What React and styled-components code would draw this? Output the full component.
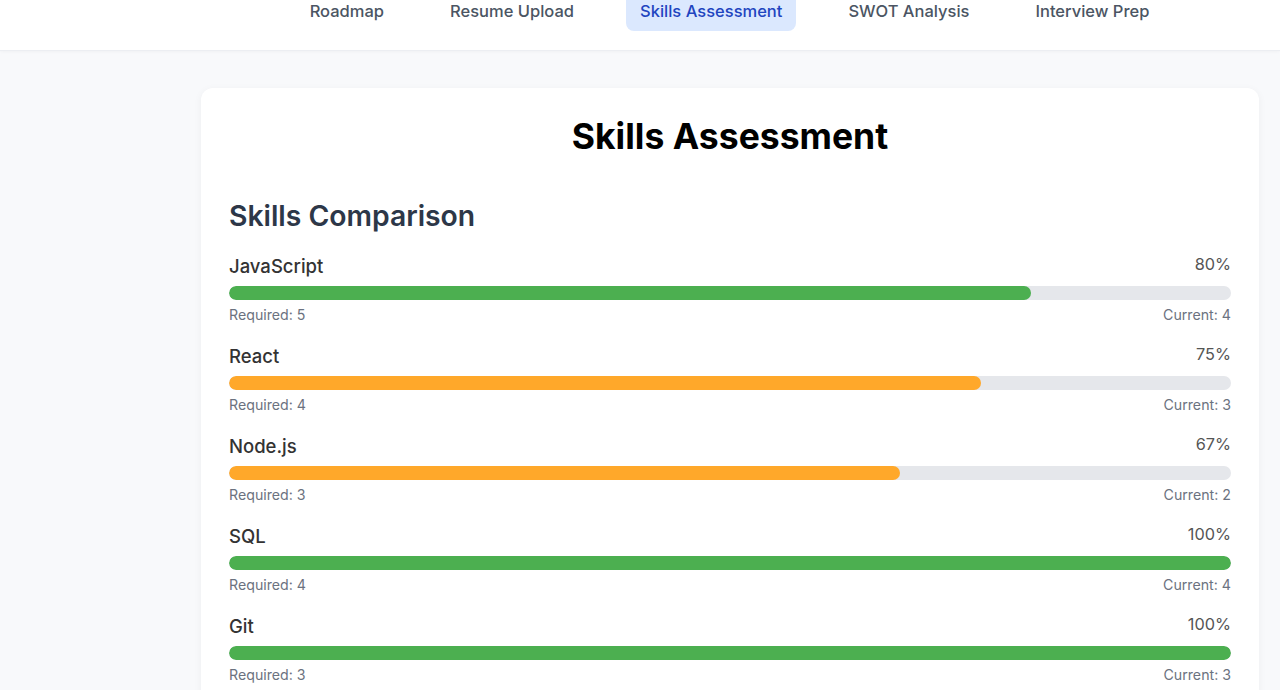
import React from 'react';
import styled, { createGlobalStyle } from 'styled-components';

const GlobalStyle = createGlobalStyle`
  body {
    margin: 0;
    background-color: #f8f9fb;
    font-family: Inter, "Noto Sans", sans-serif;
    overflow: hidden;
  }
`;

const Header = styled.header`
  display: flex;
  flex-direction: column;
  background-color: #fff;
  border-bottom: 1px solid #eceef2;
  box-shadow: 0 1px 3px rgba(0, 0, 0, 0.03);
  padding: 0 21px 19px 200px;
  height: 31px;
`;

const Nav = styled.nav`
  display: flex;
  justify-content: center;
  gap: 38px;
  margin-top: -9px;
`;

const Tab = styled.button`
  border: none;
  font-family: inherit;
  font-size: 16.5px;
  font-weight: 500;
  line-height: 24px;
  padding: 8px 14px;
  border-radius: 8px;
  cursor: pointer;
  background-color: ${(p) => (p.$active ? '#dbe8fe' : 'transparent')};
  color: ${(p) => (p.$active ? '#1f45c0' : '#4b5563')};
`;

const Main = styled.main`
  padding: 37px 21px 0 201px;
`;

const Card = styled.section`
  background-color: #fff;
  border-radius: 12px;
  box-shadow: 0 2px 8px rgba(0, 0, 0, 0.05);
  padding: 28px 28px 40px;
`;

const Title = styled.h1`
  margin: 0 0 42px;
  text-align: center;
  font-size: 35.5px;
  line-height: 41px;
  font-weight: 700;
  color: #000;
`;

const Subtitle = styled.h2`
  margin: 0 0 20px;
  font-size: 28.3px;
  line-height: 34px;
  font-weight: 600;
  color: #2d3748;
`;

const SkillRow = styled.div`
  margin-bottom: 18px;
`;

const SkillHead = styled.div`
  display: flex;
  justify-content: space-between;
  align-items: baseline;
`;

const SkillName = styled.span`
  font-size: 18.5px;
  font-weight: 500;
  line-height: 27px;
  color: #333;
`;

const Percent = styled.span`
  font-size: 16.3px;
  line-height: 22px;
  color: #555;
  position: relative;
  top: -3px;
`;

const Track = styled.div`
  height: 14px;
  margin-top: 6px;
  border-radius: 7px;
  background-color: #e5e7eb;
  overflow: hidden;
`;

const Fill = styled.div`
  height: 100%;
  border-radius: 7px;
  background-color: ${(p) => (p.$full ? '#4caf50' : '#ffa82a')};
`;

const Meta = styled.div`
  display: flex;
  justify-content: space-between;
  margin-top: 4px;
  font-size: 14.2px;
  line-height: 21px;
  color: #6b7280;
`;

const tabs = ['Roadmap', 'Resume Upload', 'Skills Assessment', 'SWOT Analysis', 'Interview Prep'];

const skills = [
  { name: 'JavaScript', required: 5, current: 4 },
  { name: 'React', required: 4, current: 3 },
  { name: 'Node.js', required: 3, current: 2 },
  { name: 'SQL', required: 4, current: 4 },
  { name: 'Git', required: 3, current: 3 },
];

const App = () => {
  return (
    <>
      <GlobalStyle />
      <Header>
        <Nav>
          {tabs.map((t) => (
            <Tab key={t} $active={t === 'Skills Assessment'}>
              {t}
            </Tab>
          ))}
        </Nav>
      </Header>
      <Main>
        <Card>
          <Title>Skills Assessment</Title>
          <Subtitle>Skills Comparison</Subtitle>
          {skills.map((s) => {
            const pct = Math.round((s.current / s.required) * 100);
            return (
              <SkillRow key={s.name}>
                <SkillHead>
                  <SkillName>{s.name}</SkillName>
                  <Percent>{pct}%</Percent>
                </SkillHead>
                <Track>
                  <Fill $full={pct >= 80} style={{ width: `${pct}%` }} />
                </Track>
                <Meta>
                  <span>Required: {s.required}</span>
                  <span>Current: {s.current}</span>
                </Meta>
              </SkillRow>
            );
          })}
        </Card>
      </Main>
    </>
  );
};

export default App;
